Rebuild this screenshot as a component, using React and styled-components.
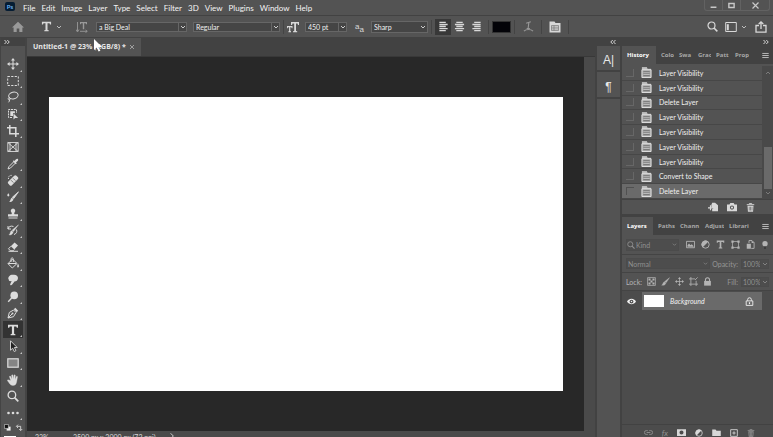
import React from 'react'
import styled, { createGlobalStyle } from 'styled-components'

const GlobalStyle = createGlobalStyle`
  * {
    box-sizing: border-box;
  }

  body {
    margin: 0;
    background: #535353;
    color: #e6e6e6;
    font-family: Lato, "Open Sans", sans-serif;
    font-size: 7px;
    line-height: 10px;
  }

  button, input, select {
    margin: 0;
    padding: 0;
    border: 0;
    background: none;
    color: inherit;
    font: inherit;
  }

  svg {
    display: block;
    flex: none;
  }
`

/* icons, all on a 12 x 12 grid */

const line = { fill: 'none', stroke: 'currentColor', strokeWidth: 1 }

const shapes = {
  move: (
    <>
      <path d="M6 2v8M2 6h8" {...line} />
      <path d="M6 0 8 2.6H4zM6 12 4 9.4h4zM0 6l2.6-2v4zM12 6 9.4 8V4z" fill="currentColor" />
    </>
  ),
  marquee: <rect x="0.7" y="1.5" width="10.6" height="9" {...line} strokeDasharray="2.2 1.3" />,
  lasso: (
    <>
      <ellipse cx="6.4" cy="4.5" rx="4.8" ry="3.4" transform="rotate(-14 6.4 4.5)" {...line} />
      <path d="M2.4 6.6c-1.6.4-1.6 2.2-.2 2.2 1.600 0 1.200-2 .2-2.200M2.500 8.800c.1 1-.2 1.800-1 2.500" {...line} />
    </>
  ),
  objectSelect: (
    <>
      <path d="M5 9.500H1.500V1.500h8V5" {...line} strokeDasharray="2 .8" />
      <path d="M3.300 3.300h4.600v2L6 5v3H3.300z" fill="currentColor" />
      <path d="M6.500 5.500v6l1.600-1.600 3 .2z" fill="currentColor" />
    </>
  ),
  crop: <path d="M2.800 0v8.800H12M0 2.800h8.800V12" {...line} strokeWidth="1.500" />,
  frame: <path d="M.8 1.500h10.400v9H.8zM.8 1.500l10.400 9M11.200 1.500.8 10.500M3 1.500v9M9 1.500v9" {...line} strokeWidth=".9" />,
  eyedropper: (
    <>
      <path d="M7 3.500 2 8.500 1 11l2.500-1 5-5" {...line} />
      <path d="M5.800 3.200l1-1 .9.900C8.600 1.500 9.800.3 10.900 1.100c.9 1-.2 2.300-1.900 3.300l.8.800-1 1z" fill="currentColor" />
    </>
  ),
  heal: (
    <>
      <path d="M1.500 5C1 2.500 3 .8 5 1.500" {...line} strokeDasharray="1 .8" />
      <rect x="0.300" y="4" width="11.400" height="5" rx="1.600" transform="rotate(-45 6 6.400)" fill="currentColor" />
      <path d="m4 6.200 2.400 2.400M6 4.200l2.400 2.400" stroke="#535353" strokeWidth=".7" />
    </>
  ),
  brush: (
    <>
      <path d="M11.500.8 6.800 7.500 5.300 6.300z" fill="currentColor" stroke="currentColor" strokeWidth=".8" />
      <path d="M4.800 6.700 6.400 8.100C6.200 10.200 4.400 11.300 2 10.800 3.800 9.800 3.300 7.400 4.800 6.700z" fill="currentColor" />
      <path d="M1.300 2.200c1.400 1.500 1.300 3.200 0 3.200S-.1 3.700 1.300 2.200z" fill="currentColor" />
    </>
  ),
  lockBrush: (
    <path d="M11.500.8 7 7.600 4.800 6zM4.500 6.300l2 1.700C6 10.500 4 11.500.8 10.900 3 9.500 2.500 7 4.500 6.300z" fill="currentColor" stroke="currentColor" strokeWidth=".4" />
  ),
  stamp: (
    <path d="M6 .6a2.300 2.300 0 0 1 1.500 4c-.5.500-.5 1 0 1.600H11v2.300H1V6.200h3.500c.5-.6.5-1.100 0-1.600A2.300 2.300 0 0 1 6 .6zM1.500 9.500h9v1h-9z" fill="currentColor" />
  ),
  historyBrush: (
    <>
      <path d="M11.500.8 6.500 7.500 5 6.300zM4.500 6.700 6.100 8.100C5.900 10.200 4 11.300 2 10.800 3.500 9.800 3 7.400 4.500 6.700z" fill="currentColor" stroke="currentColor" strokeWidth=".4" />
      <path d="M1 5C1.500 2.500 4 1.500 6.500 2.500M1 2v3h3M9.500 5.500c1 2.500-.5 4.500-2.500 5" {...line} />
    </>
  ),
  eraser: (
    <>
      <path d="M7.600 1.500 11 4.600 7.300 8.500 3.800 5.300z" fill="currentColor" />
      <path d="M3.800 5.300 1.500 7.800l2 2h2.600l1.200-1.300M1.500 10.300H11" {...line} />
    </>
  ),
  bucket: (
    <>
      <path d="M5.500 2 10 6.500 5.300 11 1 6.700zM4 5V2.500C4 .3 6.300.3 6.300 2.500V5M1.200 6.500h8" {...line} />
      <path d="M11 6.500c1.200 2 1.300 4 .1 4s-1.100-2-.1-4z" fill="currentColor" />
    </>
  ),
  smudge: (
    <path d="M2 2.500C3 .8 5 .6 7 .8c2.500.2 4 1.200 4 3.200C11 6.500 9 7.500 7.500 7.600L5 10.800c-.8 1-2.300.2-1.700-.9L4.600 7c-2 .5-3.200-.2-2.600-1.200C.9 5.200 1.200 3.300 2 2.500z" fill="currentColor" />
  ),
  dodge: (
    <>
      <circle cx="7.200" cy="4.400" r="3.800" fill="currentColor" />
      <path d="M4.700 7 1.200 10.800" {...line} strokeWidth="1.400" />
    </>
  ),
  pen: (
    <>
      <path d="M1 11 2.300 5.500 6.500 3 9 5.500 6.500 9.700zM1 11l4-4" {...line} />
      <circle cx="5.500" cy="6.500" r="1" fill="currentColor" />
      <path d="M6.800 2.300 8.300.8l2.900 2.900-1.500 1.500z" fill="currentColor" />
    </>
  ),
  type: <path d="M1 .8h10v3H9.800L9.300 2.500H7.100v7.300l1.300.4v1H3.600v-1l1.300-.4V2.500H2.700L2.200 3.800H1z" fill="currentColor" />,
  path: <path d="M3.500.8v9.400l2.200-2 1.500 3.300 1.700-.8-1.500-3.200h2.800z" fill="#222" stroke="#ddd" strokeWidth=".9" />,
  shape: <rect x="0.800" y="1.800" width="10.400" height="8.400" fill="#858585" stroke="currentColor" strokeWidth="1.200" />,
  hand: (
    <path d="M3.700 6.500 2.500 3c-.3-1 .8-1.300 1.200-.5L5 5.300 4.600 1.400c0-1 1.200-1 1.400-.1l.5 3.800L7 1.300c.2-.9 1.300-.8 1.300.1l-.2 4 1.200-2.700c.4-.8 1.400-.5 1.200.4L9.600 8c-.4 2.500-1.600 3.500-3.600 3.500S3 10.500 1.800 8.600L.5 6.800c-.4-.7.6-1.300 1.300-.7z" fill="currentColor" stroke="currentColor" strokeWidth=".3" />
  ),
  search: (
    <>
      <circle cx="4.900" cy="4.900" r="3.800" {...line} strokeWidth="1.300" />
      <path d="m7.600 7.600 3.700 3.700" {...line} strokeWidth="1.700" />
    </>
  ),
  more: (
    <g fill="currentColor">
      <circle cx="1.500" cy="6" r="1.300" />
      <circle cx="6" cy="6" r="1.300" />
      <circle cx="10.500" cy="6" r="1.300" />
    </g>
  ),
  home: <path d="M6 .8 12 6.500h-1.600V11H7.300V7.500H4.700V11H1.600V6.500H0z" fill="currentColor" />,
  orientation: (
    <>
      <path d="M4 1h7v2.300h-1L9.700 2.200H8.200v6H6.800v-6H5.200l-.3 1.100H4z" fill="currentColor" />
      <path d="M1.500 1v9M0 8.500 1.500 11 3 8.500M4 10.300h7M9.500 9l1.800 1.300L9.500 11.600" {...line} strokeWidth=".9" />
    </>
  ),
  size: (
    <path d="M4 1h8v3h-1l-.4-1.500H9V10l1.200.3v.9H6v-.9l1.200-.3V2.500H5.500L5 4H4zM0 5h5.500v2.200h-.8l-.3-1H3.300V10l.7.200v1H1.400v-1l.7-.2V6.200H1l-.3 1H0z" fill="currentColor" />
  ),
  alignLeft: <path d="M1.500 1.500h7M1.500 3.800h9M1.500 6h7M1.500 8.300h9M1.500 10.500h7" {...line} strokeWidth="1.400" />,
  alignCenter: <path d="M2.500 1.500h7M1 3.800h10M2.500 6h7M1 8.300h10M2.500 10.500h7" {...line} strokeWidth="1.400" />,
  alignRight: <path d="M3.500 1.500h7M1.500 3.800h9M3.500 6h7M1.500 8.300h9M3.500 10.500h7" {...line} strokeWidth="1.400" />,
  warp: <path d="M3.500 2.500 8.500.8M6.400 1.500 5.600 8M4 8.200h3.500M1 11c2.500-2.300 7.500-2.300 10 0" {...line} strokeWidth="1.200" />,
  panel: (
    <>
      <path d="M.5.500h5l1 1.500h5v9.500H.5z" fill="currentColor" />
      <path d="M2.500 4.500h7v5h-7zM2.500 6.200h7M2.500 7.900h7M5 4.500v5" fill="none" stroke="#777" strokeWidth=".7" />
    </>
  ),
  workspace: (
    <>
      <path d="M.7 1.500h10.600v9H.7z" {...line} />
      <path d="M1.800 3.200h2v6h-2z" fill="currentColor" />
    </>
  ),
  share: <path d="M4 4.500H1v6.700h10V4.500H8M6 8V1M3.700 3 6 .9 8.300 3" {...line} strokeWidth="1.300" />,
  chevron: <path d="m2 4 4 4 4-4" {...line} strokeWidth="1.600" />,
  chevronUp: <path d="m2 8 4-4 4 4" {...line} strokeWidth="1.600" />,
  chevronRight: <path d="m4 2 4 4-4 4" {...line} strokeWidth="1.400" />,
  expand: <path d="m1 2 4 4-4 4M6.500 2l4 4-4 4" {...line} strokeWidth="2" />,
  collapse: <path d="M5.500 2l-4 4 4 4M11 2 7 6l4 4" {...line} strokeWidth="2" />,
  close: <path d="m2 2 8 8M10 2l-8 8" {...line} strokeWidth="1.600" />,
  minimize: <path d="M1 9h10" {...line} strokeWidth="2.600" />,
  maximize: <path d="M1.500 2.500h9v7h-9z" {...line} strokeWidth="2.400" />,
  menu: <path d="M.5 2.500h11M.5 6h11M.5 9.500h11" {...line} strokeWidth="1.600" />,
  state: (
    <>
      <path d="M1 .5h5.500L7.500 2H11v9.500H1z" fill="#a8a8a8" />
      <path d="M1 3h10M1 3v8.500h10V3M1 1h5.500" fill="none" stroke="#e8e8e8" strokeWidth="1" />
      <path d="M2.500 4.500h7v5.500h-7z" fill="#7a7a7a" />
      <path d="M2.500 6.300h7M2.500 8.200h7" stroke="#ccc" strokeWidth=".9" />
    </>
  ),
  newDoc: (
    <>
      <path d="M5 1h3.500L12 4v7H5V8.500h1.500L4 5.800V3.500z" fill="currentColor" />
      <path d="M0 7h6M3 4v6" {...line} strokeWidth="1.400" />
    </>
  ),
  camera: (
    <path fillRule="evenodd" d="M0 3h3l1-1.700h4L9 3h3v8H0zM6 4.200a2.500 2.500 0 1 0 0 5 2.500 2.500 0 0 0 0-5zm0 1.200a1.300 1.300 0 1 1 0 2.600 1.300 1.300 0 0 1 0-2.600z" fill="currentColor" />
  ),
  trash: (
    <>
      <path d="M4.500 1.600V.6h3v1M1 2.200h10" {...line} strokeWidth="1.200" />
      <path fillRule="evenodd" d="M2 3.500h8l-.6 8H2.600zM3.800 5v5h.8V5zm1.900 0v5h.8V5zm1.900 0v5h.8V5z" fill="currentColor" />
    </>
  ),
  image: (
    <>
      <path d="M.6 1.800h10.800v8.500H.6z" {...line} strokeWidth="1.200" />
      <path d="M2 9V7l2-2.500L6 7l1.500-1.500L10 8v1z" fill="currentColor" />
    </>
  ),
  adjust: (
    <>
      <circle cx="6" cy="6" r="4.900" {...line} strokeWidth="1.200" />
      <path d="M9.600 2.400A5 5 0 0 0 2.400 9.600z" fill="currentColor" />
    </>
  ),
  vector: (
    <>
      <path d="M2 2h8v8H2z" {...line} />
      <path d="M.5.500h3v3h-3zM8.500.500h3v3h-3zM.5 8.500h3v3h-3zM8.500 8.500h3v3h-3z" fill="currentColor" />
    </>
  ),
  smart: (
    <>
      <path d="M4 4V.7h4L10.800 3.500v7.700H7" {...line} strokeWidth="1.200" />
      <path d="M1 5h5.500v6.500H1zM7.500.7V4h3.300z" fill="currentColor" />
    </>
  ),
  checker: (
    <>
      <path d="M.8.800h10.400v10.400H.8z" {...line} />
      <path d="M2 2h2.700v2.700H2zM7.300 2H10v2.700H7.300zM4.700 4.700h2.600v2.600H4.700zM2 7.300h2.700V10H2zM7.300 7.300H10V10H7.300z" fill="currentColor" />
    </>
  ),
  artboard: <path d="M2.500 0v12M0 2.500h8M0 9.500h12M9.500 5v7M8 4l3.500-3.500" {...line} strokeWidth="1.100" />,
  lock: (
    <>
      <path d="M3.300 5.500V3.800a2.700 2.700 0 0 1 5.400 0v1.700" {...line} strokeWidth="1.400" />
      <path d="M1.500 5.200h9v6.300h-9z" fill="currentColor" />
    </>
  ),
  lockOutline: (
    <>
      <path d="M3.500 5V3.500a2.500 2.500 0 0 1 5 0V5M1.600 5.200h8.800v6H1.600z" {...line} strokeWidth="1.200" />
      <path d="M5.200 7h1.600v2.500H5.200z" fill="currentColor" />
    </>
  ),
  eye: (
    <>
      <path d="M0 6c2.800-4.700 9.200-4.700 12 0-2.800 4.700-9.200 4.700-12 0z" fill="currentColor" />
      <circle cx="6" cy="6" r="2.500" fill="#4b4b4b" />
      <circle cx="6" cy="6" r="1" fill="currentColor" />
    </>
  ),
  link: <path d="M5 3.500H3a2.500 2.500 0 0 0 0 5h2M7 3.500h2a2.500 2.500 0 0 1 0 5H7M3.500 6h5" {...line} strokeWidth="1.200" />,
  mask: <path fillRule="evenodd" d="M0 1.500h12v9.300H0zM6 3.400a2.700 2.700 0 1 0 0 5.400 2.700 2.700 0 0 0 0-5.400z" fill="currentColor" />,
  folder: <path d="M.3 2h4.400L6 3.500h5.700v7.300H.3z" fill="currentColor" />,
  add: <path d="M1 1h10v10H1zM6 3.500v5M3.500 6h5" {...line} strokeWidth="1.300" />,
  pin: (
    <>
      <path d="M6 7v5" stroke="#333" strokeWidth="2" />
      <circle cx="6" cy="4" r="4" fill="currentColor" />
    </>
  ),
  swap: <path d="M3 3.500h5.500V9M4.500 1 2 3.500 4.500 6M6.300 7.500 8.500 10l2.300-2.500" {...line} strokeWidth="1.300" />,
  colors: (
    <>
      <path d="M4.500 4.500h6.800v6.800H4.500z" fill="#eee" />
      <path d="M.8.800h6.800v6.800H.8z" fill="#111" stroke="#ddd" strokeWidth="1" />
    </>
  ),
}

const Icon = ({ name, size = 12 }) => (
  <svg width={size} height={size} viewBox="0 0 12 12" aria-hidden="true">
    {shapes[name]}
  </svg>
)

const Shell = styled.div`
  display: flex;
  flex-direction: column;
  height: 100vh;
  overflow: hidden;
  background: #535353;
`

const MenuBar = styled.header`
  display: flex;
  flex: none;
  height: 16px;
  padding: 0 3px 0 5px;
  border-bottom: 1px solid #424242;
`

const Logo = styled.span`
  width: 10px;
  height: 9px;
  margin: 2px 8px 0 0;
  border-radius: 2px;
  background: #061d33;
  color: #6cb4f5;
  font-size: 6px;
  font-weight: 700;
  line-height: 9px;
  text-align: center;
`

const Menus = styled.nav`
  display: flex;
  flex: 1;
  align-items: center;
  gap: 6px;
  color: #f4f4f4;
  font-size: 8px;
  white-space: nowrap;
`

const WindowButtons = styled.div`
  display: flex;
  height: 11px;
  border: 1px solid #626262;
  border-top: 0;
  border-radius: 0 0 3px 3px;
`

const WindowButton = styled.button`
  display: grid;
  place-items: center;
  width: ${props => (props.$wide ? 28 : 18)}px;
  border-right: ${props => (props.$wide ? 0 : '1px solid #626262')};
  color: #c8c8c8;
`

const OptionsBar = styled.div`
  display: flex;
  flex: none;
  align-items: center;
  height: 22px;
  border-bottom: 1px solid #424242;
`

const Slot = styled.button`
  display: flex;
  flex: none;
  align-items: center;
  justify-content: ${props => (props.$start ? 'flex-start' : 'center')};
  gap: 4px;
  width: ${props => props.$w}px;
  height: 16px;
  color: ${props => (props.$dim ? '#999' : '#d8d8d8')};
  background: ${props => (props.$active ? '#383838' : 'none')};
`

const Divider = styled.span`
  flex: none;
  width: 1px;
  height: 14px;
  margin: 0 3px;
  background: #444;
`

const Combo = styled.span`
  display: flex;
  flex: none;
  align-items: center;
  width: ${props => props.$w}px;
  height: ${props => props.$h || 10}px;
  margin-right: ${props => props.$gap || 0}px;
  border: 1px solid ${props => (props.$dim ? '#4b4b4b' : '#666')};
  background: ${props => (props.$dim ? '#4d4d4d' : '#454545')};
  color: ${props => (props.$dim ? '#909090' : '#f0f0f0')};

  input, select {
    flex: 1;
    min-width: 0;
    height: 8px;
    padding-left: ${props => (props.$dim ? 1 : 2)}px;
    appearance: none;
    font-size: 7px;
    line-height: 8px;
  }

  button {
    display: grid;
    place-items: center;
    width: 8px;
    height: 8px;
    border-left: 1px solid ${props => (props.$dim ? '#4b4b4b' : '#666')};
  }

  select + svg {
    margin-right: 1px;
    pointer-events: none;
  }
`

const Swatch = styled.button`
  flex: none;
  width: 19px;
  height: 12px;
  border: 1px solid #333;
  background: #030308;
`

const AntiAlias = styled.span`
  flex: none;
  width: 24px;
  padding-left: 8px;
  color: #d8d8d8;
  font-family: "Liberation Sans", sans-serif;
  font-size: 8px;
  line-height: 12px;

  sub {
    font-size: 8px;
    line-height: 0;
  }
`

const Spacer = styled.span`
  flex: 1;
`

const Body = styled.div`
  display: flex;
  flex: 1;
  min-height: 0;
`

const Toolbar = styled.aside`
  display: flex;
  flex: none;
  flex-direction: column;
  width: 27px;
  border-left: 1px solid #444;
  border-right: 2px solid #444;
`

const StripHead = styled.div`
  display: flex;
  flex: none;
  align-items: center;
  justify-content: ${props => (props.$end ? 'flex-end' : 'flex-start')};
  height: 8px;
  padding: 0 4px 0 3px;
  background: #424242;
  color: #d8d8d8;
`

const Tools = styled.div`
  display: grid;
  flex: 1;
  grid-auto-rows: 1fr;
  min-height: 0;
  padding-top: 10px;
`

const Tool = styled.button`
  position: relative;
  display: grid;
  place-items: center;
  width: 20px;
  min-height: 0;
  margin-left: 2px;
  background: ${props => (props.$active ? '#333' : 'none')};
  color: #dcdcdc;

  /* flyout mark in the lower corner */
  &::after {
    content: ${props => (props.$plain ? 'none' : '""')};
    position: absolute;
    right: 1px;
    bottom: 1px;
    border-left: 2px solid transparent;
    border-bottom: 2px solid #c8c8c8;
  }
`

const ColorWells = styled.div`
  display: flex;
  flex: none;
  flex-wrap: wrap;
  gap: 4px;
  height: 16px;
  padding: 3px 0 0 3px;
  overflow: hidden;
  color: #dcdcdc;
`

const Foreground = styled.button`
  width: 12px;
  height: 12px;
  background: #fff;
`

const Document = styled.main`
  display: flex;
  flex: 1;
  flex-direction: column;
  min-width: 0;
`

const DocTabs = styled.div`
  flex: none;
  height: 19px;
  background: #424242;
  border-bottom: 1px solid #383838;
`

const DocTab = styled.div`
  display: inline-flex;
  align-items: center;
  gap: 3px;
  height: 18px;
  padding: 0 6px;
  background: #535353;
  font-family: "Open Sans", sans-serif;
  font-size: 7px;
  font-weight: 700;
  white-space: nowrap;

  button {
    color: #b0b0b0;
  }
`

const Viewport = styled.div`
  display: flex;
  flex: 1;
  min-height: 0;
  background: #4a4a4a;
`

const Pasteboard = styled.div`
  display: flex;
  flex: 1;
  margin-right: 11px;
  padding: 40px 21px 40px 22px;
  background: #282828;
`

const Page = styled.div`
  flex: 1;
  background: #fff;
`

/* only the upper part of this line fits above the window edge */
const StatusBar = styled.footer`
  display: flex;
  flex: none;
  height: 6px;
  padding: 1px 8px 0;
  background: #4a4a4a;
  color: #d8d8d8;
  font-size: 7px;
  white-space: nowrap;

  span {
    width: 38px;
  }

  button {
    display: flex;
    gap: 12px;
    height: 10px;
  }
`

const Side = styled.aside`
  display: flex;
  flex: none;
  flex-direction: column;
  width: ${props => props.$w}px;
  border-left: 2px solid #424242;
`

const DockButton = styled.button`
  height: ${props => (props.$first ? 26 : 27)}px;
  padding-top: 4px;
  border-bottom: 2px solid #424242;
  color: #e8e8e8;
  font-family: "Liberation Sans", sans-serif;
  font-size: 12px;
`

const Tabs = styled.div`
  display: flex;
  flex: none;
  height: 18px;
  background: #424242;
  color: #a8a8a8;
  font-family: "Open Sans", sans-serif;
  font-size: 6px;
  font-weight: 700;

  > button:last-child {
    margin-left: auto;
    padding-right: 4px;
    color: #c0c0c0;
  }
`

const Tab = styled.button`
  flex: none;
  width: ${props => props.$w}px;
  padding-left: 5px;
  overflow: hidden;
  background: ${props => (props.$active ? '#535353' : 'none')};
  color: ${props => (props.$active ? '#fff' : 'inherit')};
  text-align: left;
  white-space: nowrap;
`

const History = styled.div`
  display: flex;
  flex: none;
  height: 135px;
  padding-top: 2px;
`

const States = styled.ol`
  display: grid;
  flex: 1;
  grid-auto-rows: 1fr;
  margin: 0;
  padding: 0;
  list-style: none;
`

const State = styled.li`
  display: flex;
  align-items: center;
  min-height: 0;
  padding-left: 4px;
  border-bottom: 1px solid #474747;
  background: ${props => (props.$current ? '#6a6a6a' : 'none')};
  color: #f0f0f0;

  input {
    width: 8px;
    height: 8px;
    margin-right: 7px;
    appearance: none;
    border: solid ${props => (props.$current ? '#505050' : '#676767')};
    border-width: ${props => (props.$current ? '1px 0 0 1px' : '0 1px 1px 0')};
  }

  label {
    display: flex;
    align-items: center;
    gap: 7px;
  }
`

const Scrollbar = styled.div`
  display: flex;
  flex: none;
  flex-direction: column;
  align-items: center;
  justify-content: space-between;
  width: 11px;
  padding: 4px 0 3px;
  background: #494949;
  color: #888;
`

const Thumb = styled.span`
  width: 8px;
  height: 42px;
  margin-top: auto;
  margin-bottom: 1px;
  background: #6a6a6a;
`

const PanelFoot = styled.div`
  display: flex;
  flex: none;
  align-items: center;
  justify-content: flex-end;
  gap: 9px;
  height: ${props => props.$h}px;
  padding: ${props => props.$pad || 0}px 18px 0 0;
  border-top: 1px solid #424242;
  color: #d8d8d8;

  button:disabled {
    color: #909090;
  }

  i {
    font-size: 8px;
  }
`

const LayersPanel = styled.section`
  display: flex;
  flex: 1;
  flex-direction: column;
  min-height: 0;
  border-top: 3px solid #424242;
  background: #4c4c4c;
`

const PanelRow = styled.div`
  display: flex;
  flex: none;
  align-items: center;
  justify-content: space-between;
  height: ${props => props.$h}px;
  padding: 0 4px;
  border-bottom: 1px solid #444;
  background: #535353;
  color: #969696;
`

const Group = styled.div`
  display: flex;
  align-items: center;
  gap: ${props => props.$gap || 3}px;
  color: ${props => (props.$lit ? '#b4b4b4' : 'inherit')};
`

const Layer = styled.div`
  display: flex;
  flex: none;
  align-items: center;
  height: 19px;
  padding-top: 1px;
  margin-right: 11px;
  color: #f0f0f0;
  font-style: italic;

  > button {
    padding: 0 6px 0 5px;
  }
`

const LayerBody = styled.div`
  display: flex;
  flex: 1;
  align-items: center;
  height: 18px;
  padding: 0 8px 0 2px;
  background: #6a6a6a;

  svg {
    margin-left: auto;
  }
`

const Thumbnail = styled.span`
  width: 20px;
  height: 12px;
  margin-right: 6px;
  background: #fff;
`

const Pointer = styled.svg`
  position: absolute;
  left: 93px;
  top: 39px;
`

const menus = ['File', 'Edit', 'Image', 'Layer', 'Type', 'Select', 'Filter', '3D', 'View', 'Plugins', 'Window', 'Help']

const tools = [
  'move', 'marquee', 'lasso', 'objectSelect', 'crop', 'frame', 'eyedropper', 'heal',
  'brush', 'stamp', 'historyBrush', 'eraser', 'bucket', 'smudge', 'dodge', 'pen',
  'type', 'path', 'shape', 'hand', 'search', 'more',
]

const states = [
  'Layer Visibility', 'Layer Visibility', 'Delete Layer', 'Layer Visibility', 'Layer Visibility',
  'Layer Visibility', 'Layer Visibility', 'Convert to Shape', 'Delete Layer',
]

const PanelTabs = ({ names, widths }) => (
  <Tabs role="tablist">
    {names.map((name, i) => (
      <Tab key={name} role="tab" aria-selected={i === 0} $active={i === 0} $w={widths[i]}>{name}</Tab>
    ))}
    <button aria-label="Panel menu"><Icon name="menu" size={7} /></button>
  </Tabs>
)

const Field = ({ label, value, ...rest }) => (
  <Combo {...rest}>
    <input aria-label={label} defaultValue={value} />
    <button aria-label={`${label} list`}><Icon name="chevron" size={6} /></button>
  </Combo>
)

export default () => {
  return (
    <>
      <GlobalStyle />
      <Shell>
        <MenuBar>
          <Logo>Ps</Logo>
          <Menus>
            {menus.map(name => <button key={name}>{name}</button>)}
          </Menus>
          <WindowButtons>
            <WindowButton aria-label="Minimize"><Icon name="minimize" size={7} /></WindowButton>
            <WindowButton aria-label="Maximize"><Icon name="maximize" size={7} /></WindowButton>
            <WindowButton aria-label="Close" $wide><Icon name="close" size={9} /></WindowButton>
          </WindowButtons>
        </MenuBar>

        <OptionsBar>
          <Slot $w={35} $dim aria-label="Home"><Icon name="home" size={12} /></Slot>
          <Slot $w={33} aria-label="Type tool"><Icon name="type" size={11} /><Icon name="chevron" size={6} /></Slot>
          <Slot $w={28} $dim aria-label="Text orientation"><Icon name="orientation" size={12} /></Slot>
          <Field label="Font" value="a Big Deal" $w={91} $gap={6} />
          <Field label="Font style" value="Regular" $w={87} />
          <Divider />
          <Slot $w={18} $start aria-label="Font size"><Icon name="size" size={12} /></Slot>
          <Field label="Size" value="450 pt" $w={42} />
          <AntiAlias>a<sub>a</sub></AntiAlias>
          <Combo $w={57} $h={12}>
            <select aria-label="Anti-aliasing"><option>Sharp</option></select>
            <Icon name="chevron" size={6} />
          </Combo>
          <Divider />
          <Slot $w={16} $active aria-label="Align left"><Icon name="alignLeft" size={11} /></Slot>
          <Slot $w={17} aria-label="Align center"><Icon name="alignCenter" size={11} /></Slot>
          <Slot $w={17} aria-label="Align right"><Icon name="alignRight" size={11} /></Slot>
          <Divider />
          <Swatch aria-label="Text color" />
          <Divider />
          <Slot $w={20} $dim aria-label="Warp text"><Icon name="warp" size={11} /></Slot>
          <Divider />
          <Slot $w={20} aria-label="Character panels"><Icon name="panel" size={12} /></Slot>
          <Divider />
          <Spacer />
          <Slot $w={20} aria-label="Search"><Icon name="search" size={11} /></Slot>
          <Slot $w={27} aria-label="Workspace"><Icon name="workspace" size={12} /><Icon name="chevron" size={6} /></Slot>
          <Slot $w={24} aria-label="Share"><Icon name="share" size={12} /></Slot>
        </OptionsBar>

        <Body>
          <Toolbar>
            <StripHead><Icon name="expand" size={6} /></StripHead>
            <Tools>
              {tools.map(name => (
                <Tool key={name} aria-label={name} $active={name === 'type'} $plain={name === 'frame' || name === 'search'}>
                  <Icon name={name} size={12} />
                </Tool>
              ))}
            </Tools>
            <ColorWells>
              <Icon name="colors" size={7} />
              <Icon name="swap" size={8} />
              <Foreground aria-label="Foreground color" />
            </ColorWells>
          </Toolbar>

          <Document>
            <DocTabs>
              <DocTab>
                Untitled-1 @ 23% (RGB/8) *
                <button aria-label="Close document"><Icon name="close" size={6} /></button>
              </DocTab>
            </DocTabs>
            <Viewport>
              <Pasteboard><Page /></Pasteboard>
            </Viewport>
            <StatusBar>
              <span>23%</span>
              <button>3500 px x 2000 px (72 ppi) <Icon name="chevronRight" size={8} /></button>
            </StatusBar>
          </Document>

          <Side $w={25}>
            <StripHead $end><Icon name="collapse" size={6} /></StripHead>
            <DockButton $first aria-label="Character">A|</DockButton>
            <DockButton aria-label="Paragraph">¶</DockButton>
          </Side>

          <Side $w={153}>
            <StripHead $end><Icon name="expand" size={6} /></StripHead>
            <PanelTabs names={['History', 'Colo', 'Swa', 'Grac', 'Patt', 'Prop']} widths={[34, 18, 19, 18, 19, 19]} />
            <History>
              <States>
                {states.map((name, i) => (
                  <State key={i} $current={i === states.length - 1}>
                    <input type="checkbox" id={`state-${i}`} />
                    <label htmlFor={`state-${i}`}><Icon name="state" size={11} />{name}</label>
                  </State>
                ))}
              </States>
              <Scrollbar>
                <Icon name="chevronUp" size={6} />
                <Thumb />
                <Icon name="chevron" size={6} />
              </Scrollbar>
            </History>
            <PanelFoot $h={15}>
              <button aria-label="New document from state"><Icon name="newDoc" size={10} /></button>
              <button aria-label="New snapshot"><Icon name="camera" size={10} /></button>
              <button aria-label="Delete state"><Icon name="trash" size={9} /></button>
            </PanelFoot>

            <LayersPanel>
              <PanelTabs names={['Layers', 'Paths', 'Chann', 'Adjust', 'Librari']} widths={[31, 22, 25, 24, 25]} />
              <PanelRow $h={20}>
                <Combo $w={53} $h={12} $dim>
                  <Icon name="search" size={8} />
                  <select aria-label="Filter"><option>Kind</option></select>
                  <Icon name="chevron" size={5} />
                </Combo>
                <Group $gap={6} $lit>
                  <Icon name="image" size={9} />
                  <Icon name="adjust" size={9} />
                  <Icon name="type" size={9} />
                  <Icon name="vector" size={9} />
                  <Icon name="smart" size={9} />
                  <Icon name="pin" size={8} />
                </Group>
              </PanelRow>
              <PanelRow $h={18}>
                <Combo $w={84} $h={11} $dim>
                  <select aria-label="Blend mode"><option>Normal</option></select>
                  <Icon name="chevron" size={5} />
                </Combo>
                <Group>Opacity:<Field label="Opacity" value="100%" $w={28} $dim /></Group>
              </PanelRow>
              <PanelRow $h={18}>
                <Group $gap={5} $lit>
                  Lock:
                  <Icon name="checker" size={9} />
                  <Icon name="lockBrush" size={9} />
                  <Icon name="move" size={9} />
                  <Icon name="artboard" size={9} />
                  <Icon name="lock" size={9} />
                </Group>
                <Group>Fill:<Field label="Fill" value="100%" $w={28} $dim /></Group>
              </PanelRow>
              <Layer>
                <button aria-label="Layer visible"><Icon name="eye" size={9} /></button>
                <LayerBody>
                  <Thumbnail />
                  Background
                  <Icon name="lockOutline" size={9} />
                </LayerBody>
              </Layer>
              <Spacer />
              <PanelFoot $h={13} $pad={3}>
                <button disabled aria-label="Link layers"><Icon name="link" size={9} /></button>
                <button disabled><i>fx</i></button>
                <button aria-label="Add mask"><Icon name="mask" size={9} /></button>
                <button aria-label="New adjustment"><Icon name="adjust" size={8} /></button>
                <button aria-label="New group"><Icon name="folder" size={9} /></button>
                <button aria-label="New layer"><Icon name="add" size={8} /></button>
                <button disabled aria-label="Delete layer"><Icon name="trash" size={8} /></button>
              </PanelFoot>
            </LayersPanel>
          </Side>
        </Body>

        <Pointer width="10" height="13" viewBox="0 0 10 13" aria-hidden="true">
          <path d="M1 0v11l2.600-2.400 2 4 1.800-.9-2-3.800H9z" fill="#fff" />
        </Pointer>
      </Shell>
    </>
  )
}
